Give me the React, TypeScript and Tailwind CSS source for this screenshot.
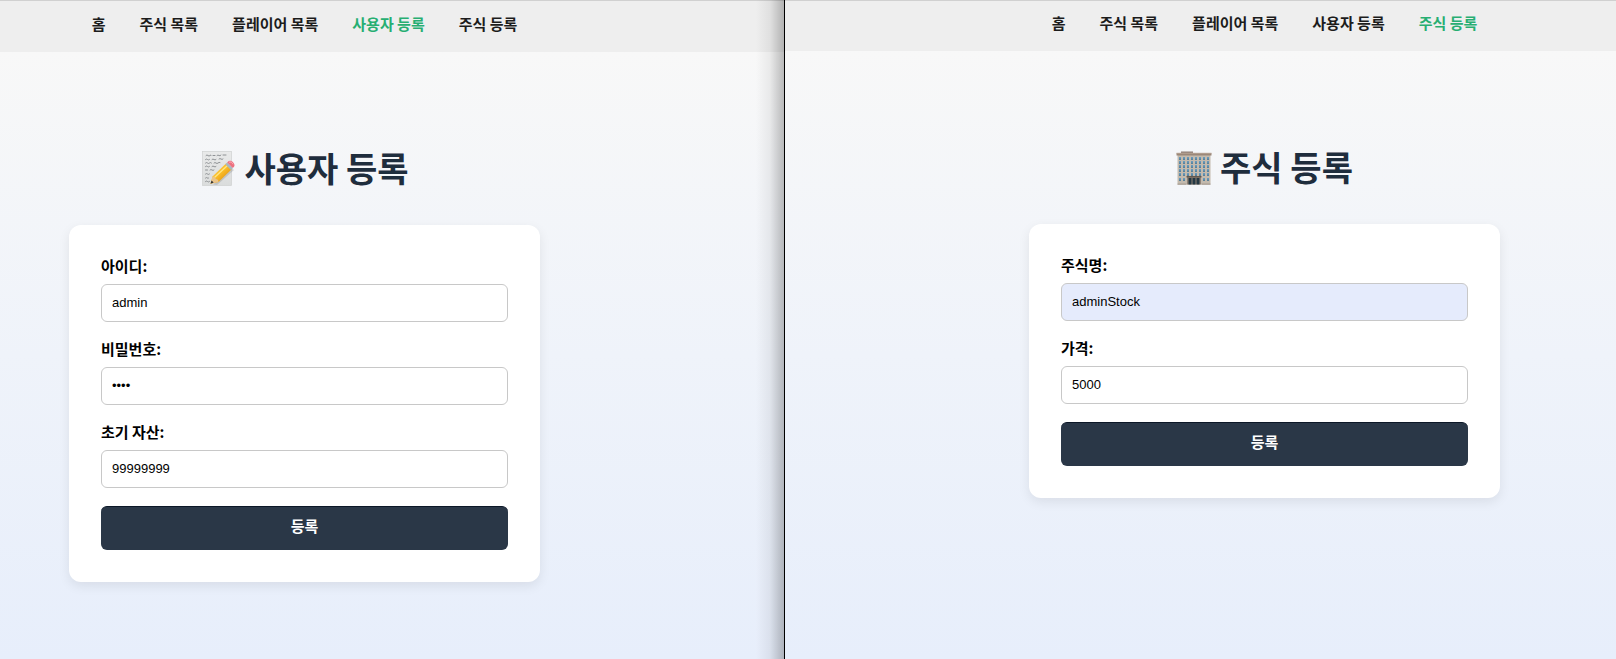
import { useId, type ReactNode } from "react";

const NAV_ITEMS = ["홈", "주식 목록", "플레이어 목록", "사용자 등록", "주식 등록"];

function MemoIcon() {
  return (
    <svg viewBox="0 0 36 38" className="h-[38px] w-9" aria-hidden="true">
      <defs>
        <linearGradient id="memo-paper" x1="0" y1="0" x2="0" y2="1">
          <stop offset="0" stopColor="#e9eaea" />
          <stop offset="1" stopColor="#dadcdc" />
        </linearGradient>
        <linearGradient id="memo-pencil" x1="0" y1="0" x2="1" y2="1">
          <stop offset="0" stopColor="#ffd95c" />
          <stop offset="0.5" stopColor="#f9b924" />
          <stop offset="1" stopColor="#c9780f" />
        </linearGradient>
      </defs>
      <rect x="2.500" y="2.500" width="29" height="34" fill="url(#memo-paper)" stroke="#cfd1d1" strokeWidth="0.7" />
      <g stroke="#85888b" strokeWidth="0.9" fill="none" strokeLinecap="round">
        <path d="M6 6.500q1-1.200 2 0t2 0 1 0M13 6.500h2M17 6.500q1-1 2 0t2-.5M23 6h3" />
        <path d="M5.500 10.500q1-1 2 0t2 0M12 10.500q1-1 2 0t2 0M19 10q1-1 2 0t2 0" />
        <path d="M5.500 14q1-1 2 0t2 0 2 0M14 14q1-1 2 0t2 0 2-.5" />
        <path d="M5.500 17.500q1-1 2 0t2 0M12 17.500q1-1 2 0t2 0" />
        <path d="M5.500 21h2M10 21q1-1 2 0t2 0" />
        <path d="M5.500 25q1-1 2 0t2 0M5.500 29q1-1 2 0t1 0M5.500 32.500q1-1 2 0t2 0" />
      </g>
      <path d="M13 35.500 32 19.500l2 1.500L17 36Z" fill="#8b8e90" opacity="0.35" />
      <path d="M10.500 34.700 12.500 27.500 26 14.500l5.700 5.800L18.500 33Z" fill="url(#memo-pencil)" />
      <path d="m14.500 28.500 13.500-12.500" stroke="#ffe783" strokeWidth="1.300" />
      <path d="M10.500 34.700 12.500 27.500q2.900-.1 3.200 2.600 2.800.2 2.800 2.900Z" fill="#eac48b" />
      <path d="m10.500 34.700 1-3.200 2.200 2.100Z" fill="#333" />
      <path d="m25.200 15.300 2-1.900 5.700 5.800-2 1.900Z" fill="#a9b8bf" />
      <path d="m27.200 13.400 1.200-1.200c2.700-2.100 7.700 2.700 5.600 5.500l-1.200 1.400Z" fill="#ec7180" />
      <path d="M29 13.200c1.500-.8 3.500.6 4 2" stroke="#ffafb5" strokeWidth="1" fill="none" />
    </svg>
  );
}

function BuildingIcon() {
  const rows = [9, 13, 17, 21, 25, 30];
  const cols = [3, 7, 11, 15, 19, 23, 27, 31];
  return (
    <svg viewBox="0 0 36 38" className="h-[38px] w-9" aria-hidden="true">
      <path d="M5 3.500h12v2.500H5Z" fill="#8d7d73" />
      <path d="M1.500 6h33v30.500h-33Z" fill="#c3baae" />
      <path d="M.5 5h35v2.500H.5Z" fill="#9b8779" />
      <path d="M.5 4.800h35v.8H.5Z" fill="#c4b1a2" />
      {rows.map((y) =>
        cols.map((x) => (
          <g key={`${x}-${y}`}>
            <rect x={x} y={y} width="2" height="2.600" fill="#6899bb" />
            <rect x={x} y={y + 1.8} width="2" height="0.800" fill="#3b6987" />
          </g>
        )),
      )}
      <path d="M11 28h14v8.500H11Z" fill="#8f8175" />
      <path d="M12.500 30h3v6.500h-3ZM16.500 30h3v6.500h-3ZM20.500 30h3v6.500h-3Z" fill="#243844" />
      <path d="M10.500 28h15v1.500h-15Z" fill="#615850" />
      <path d="M1.500 35.700h9v.8h-9ZM25.500 35.700h9v.8h-9Z" fill="#8d8074" />
    </svg>
  );
}

type FieldProps = {
  label: string;
  value: string;
  type?: string;
  filled?: boolean;
};

function Field({ label, value, type = "text", filled = false }: FieldProps) {
  const id = useId();
  return (
    <div className="mb-[18px] flex flex-col gap-[10px]">
      <label htmlFor={id} className="text-[15px] leading-[17px] font-bold text-black">
        {label}
      </label>
      <input
        id={id}
        type={type}
        defaultValue={value}
        autoComplete="off"
        className={`h-[38px] w-full rounded-md border border-[#c8c8c8] px-[10px] pb-[2px] font-['Liberation_Sans',sans-serif] text-[13px] text-black ${
          filled ? "bg-[#e5ebfc]" : "bg-white"
        }`}
      />
    </div>
  );
}

type PageProps = {
  active: string;
  title: string;
  icon: ReactNode;
  inset: string;
  navHeight: string;
  children: ReactNode;
};

function Page({ active, title, icon, inset, navHeight, children }: PageProps) {
  return (
    <div className="flex min-w-0 flex-1 flex-col">
      <nav className={`border-t border-[#d0d0d0] bg-[#eeeeee] ${inset} ${navHeight}`}>
        <ul className="flex h-full items-center justify-center gap-[34px] pb-2">
          {NAV_ITEMS.map((item) => (
            <li key={item}>
              <a
                href="#"
                className={`text-[15px] leading-5 font-bold whitespace-nowrap ${
                  item === active ? "text-[#27ae72]" : "text-[#1c1c1c]"
                }`}
              >
                {item}
              </a>
            </li>
          ))}
        </ul>
      </nav>
      <main
        className={`flex flex-1 flex-col items-center bg-linear-to-b from-[#f8f8f8] via-[#eff3fa] to-[#e7eefb] pt-24 pb-12 ${inset}`}
      >
        <h1 className="flex items-center gap-2 text-[34px] leading-[40px] font-bold text-[#1f2d3d]">
          {icon}
          {title}
        </h1>
        <form
          className="mt-[37px] w-full max-w-[471px] rounded-xl bg-white p-8 shadow-[0_4px_12px_rgba(0,0,0,0.08)]"
          onSubmit={(event) => event.preventDefault()}
        >
          {children}
          <button
            type="submit"
            className="h-11 w-full rounded-md border-t border-[#0c1727] bg-[#2a3747] pb-1 text-[15px] font-bold text-white"
          >
            등록
          </button>
        </form>
      </main>
    </div>
  );
}

export default function App() {
  return (
    <div className="grid min-h-screen grid-cols-[784fr_832fr] font-['Noto_Sans_CJK_KR',sans-serif]">
      <section className="relative flex min-w-0">
        <Page active="사용자 등록" title="사용자 등록" icon={<MemoIcon />} inset="pr-[175px]" navHeight="h-[52px]">
          <Field label="아이디:" value="admin" />
          <Field label="비밀번호:" value="1234" type="password" />
          <Field label="초기 자산:" value="99999999" type="number" />
        </Page>
        <div className="pointer-events-none absolute inset-y-0 right-0 w-7 bg-linear-to-r from-transparent via-black/6 to-black/25" />
      </section>
      <section className="flex min-w-0 border-l border-black">
        <Page active="주식 등록" title="주식 등록" icon={<BuildingIcon />} inset="pl-32" navHeight="h-[51px]">
          <Field label="주식명:" value="adminStock" filled />
          <Field label="가격:" value="5000" type="number" />
        </Page>
      </section>
    </div>
  );
}
